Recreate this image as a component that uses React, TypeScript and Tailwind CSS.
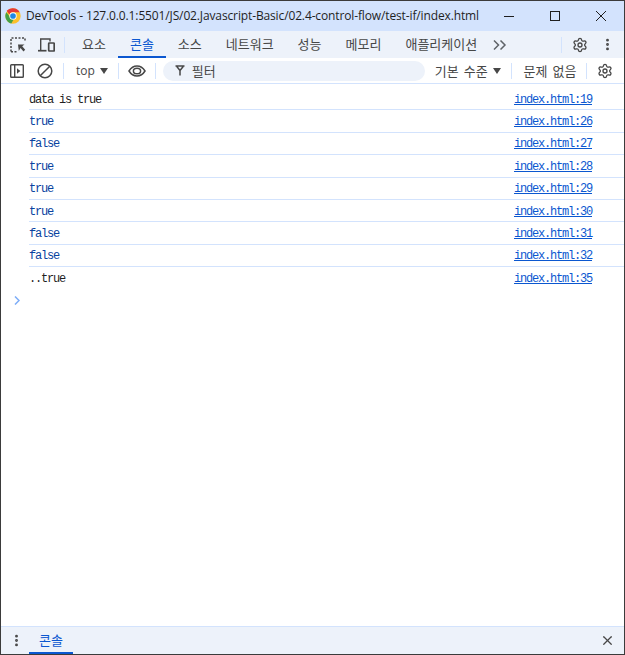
import { MoreVertical, X, Settings } from "lucide-react"

const rows = [
  { text: "data is true", src: "index.html:19", value: false },
  { text: "true", src: "index.html:26", value: true },
  { text: "false", src: "index.html:27", value: true },
  { text: "true", src: "index.html:28", value: true },
  { text: "true", src: "index.html:29", value: true },
  { text: "true", src: "index.html:30", value: true },
  { text: "false", src: "index.html:31", value: true },
  { text: "false", src: "index.html:32", value: true },
  { text: "..true", src: "index.html:35", value: false },
]

const tabs = ["요소", "콘솔", "소스", "네트워크", "성능", "메모리", "애플리케이션"]

function ChromeLogo() {
  return (
    <svg width="16" height="16" viewBox="0 0 48 48" className="shrink-0">
      <circle cx="24" cy="24" r="23" fill="#fbc02d" />
      <path d="M24 1a23 23 0 0 1 20 11.5H24a11.5 11.5 0 0 0-10.6 7L5 8.5A23 23 0 0 1 24 1z" fill="#e53935" />
      <path d="M4 12.5a23 23 0 0 0 15 33.9l8-13.8a11.5 11.5 0 0 1-13-7z" fill="#43a047" />
      <circle cx="24" cy="24" r="11" fill="#fff" />
      <circle cx="24" cy="24" r="8.5" fill="#1e88e5" />
    </svg>
  )
}

function WindowControls() {
  return (
    <div className="ml-auto flex items-center gap-[36px] pr-[18px]">
      <svg width="10" height="10" viewBox="0 0 10 10" stroke="#1f1f1f" strokeWidth="1">
        <path d="M0 5.500h10" />
      </svg>
      <svg width="10" height="10" viewBox="0 0 10 10" fill="none" stroke="#1f1f1f" strokeWidth="1">
        <rect x="0.500" y="0.500" width="9" height="9" />
      </svg>
      <svg width="10" height="10" viewBox="0 0 10 10" stroke="#1f1f1f" strokeWidth="1">
        <path d="M0 0 10 10M10 0 0 10" />
      </svg>
    </div>
  )
}

function InspectIcon() {
  return (
    <svg width="16" height="16" viewBox="0 0 16 16" fill="none" stroke="#474747" strokeWidth="1.5">
      <path d="M1 14.500V1h14v4" strokeDasharray="2 1.500" />
      <path d="M1 14.800h6" strokeDasharray="2 1.500" />
      <path d="M8 7.500h6.500l-2.300 1.700 3 3.600-1.700 1.700-3-3.500L8.800 14z" fill="#474747" stroke="none" />
    </svg>
  )
}

function DeviceIcon() {
  return (
    <svg width="17" height="14" viewBox="0 0 17 14" fill="none" stroke="#474747" strokeWidth="1.400">
      <path d="M2.700 12V1h9.300v2.500" />
      <path d="M0 12.700h8.500" strokeWidth="1.700" />
      <rect x="10.700" y="5" width="5.500" height="8" rx="0.600" strokeWidth="1.700" />
    </svg>
  )
}

function SidebarIcon() {
  return (
    <svg width="14" height="14" viewBox="0 0 14 14" fill="none" stroke="#474747" strokeWidth="1.400">
      <rect x="0.700" y="0.700" width="12.600" height="12.600" rx="0.800" />
      <path d="M4.700 1v12" />
      <path d="M7 4.300 10.300 7 7 9.700z" fill="#474747" stroke="none" />
    </svg>
  )
}

function ClearIcon() {
  return (
    <svg width="16" height="16" viewBox="0 0 16 16" fill="none" stroke="#474747" strokeWidth="1.500">
      <circle cx="8" cy="8" r="6.800" />
      <path d="M3.200 12.800 12.800 3.200" />
    </svg>
  )
}

function EyeIcon() {
  return (
    <svg width="18" height="12" viewBox="0 0 18 12" fill="none" stroke="#474747" strokeWidth="1.500">
      <path d="M1 6c2-3.200 4.800-5 8-5s6 1.800 8 5c-2 3.200-4.800 5-8 5S3 9.200 1 6z" />
      <ellipse cx="9" cy="6" rx="3.600" ry="2.800" />
    </svg>
  )
}

function FilterIcon() {
  return (
    <svg width="10" height="11" viewBox="0 0 10 11" fill="none" stroke="#474747" strokeWidth="1.500">
      <path d="M0.500 1h9M1.800 1.500 5 5.500l3.200-4M5 5v5.500" />
    </svg>
  )
}

function DoubleChevron() {
  return (
    <svg width="14" height="10" viewBox="0 0 14 10" fill="none" stroke="#5f6368" strokeWidth="1.500" className="ml-[4px] self-center">
      <path d="M1 0.500 5.500 5 1 9.500M7.500 0.500 12 5 7.500 9.500" />
    </svg>
  )
}

function Caret() {
  return <span className="ml-[5px] h-0 w-0 border-x-[4px] border-t-[6px] border-x-transparent border-t-[#474747]" />
}

function Divider({ className = "" }: { className?: string }) {
  return <div className={`h-[16px] w-px bg-[#d3e3fd] ${className}`} />
}

export default function App() {
  return (
    <div
      className="flex h-[655px] w-[625px] flex-col overflow-hidden border border-[#3b3b3b] bg-white text-[#474747]"
      style={{ fontFamily: '"Noto Sans CJK KR", "Noto Sans", sans-serif' }}
    >
      {/* Title bar */}
      <div className="flex h-[30px] shrink-0 items-center bg-[#d3e3fd]">
        <div className="ml-[4px] mr-[5px]"><ChromeLogo /></div>
        <span className="text-[12px] tracking-[-0.130px] text-[#1f1f1f]" style={{ fontFamily: '"Open Sans", sans-serif' }}>
          DevTools - 127.0.0.1:5501/JS/02.Javascript-Basic/02.4-control-flow/test-if/index.html
        </span>
        <WindowControls />
      </div>

      {/* Tabs */}
      <div className="flex h-[27px] shrink-0 items-stretch bg-[#edf2fa]">
        <div className="flex w-[69px] items-center pl-[9px]">
          <InspectIcon />
          <div className="ml-[12px]"><DeviceIcon /></div>
          <Divider className="ml-[9px]" />
        </div>
        {tabs.map((tab, i) => (
          <div
            key={tab}
            className={`flex items-center border-b-2 px-[12px] text-[13px] ${i === 1 ? "border-[#0b57d0] text-[#0b57d0]" : "border-transparent"}`}
          >
            {tab}
          </div>
        ))}
        <DoubleChevron />
        <div className="ml-auto flex items-center">
          <Divider className="mr-[10px]" />
          <Settings size={16} strokeWidth={2} className="mr-[12px]" />
          <MoreVertical size={15} strokeWidth={2.600} className="mr-[9px]" />
        </div>
      </div>

      {/* Console toolbar */}
      <div className="flex h-[26px] shrink-0 items-center border-b border-[#d3e3fd] bg-white">
        <div className="ml-[9px]"><SidebarIcon /></div>
        <div className="ml-[13px]"><ClearIcon /></div>
        <Divider className="ml-[10px]" />
        <span className="ml-[12px] text-[12px]" style={{ fontFamily: '"Open Sans", sans-serif' }}>top</span>
        <Caret />
        <Divider className="ml-[10px]" />
        <div className="ml-[9px]"><EyeIcon /></div>
        <Divider className="ml-[9px]" />
        <div className="ml-[7px] flex h-[20px] w-[262px] items-center rounded-full bg-[#edf2fa] pl-[12px]">
          <FilterIcon />
          <span className="ml-[7px] text-[13px]">필터</span>
        </div>
        <span className="ml-[10px] text-[13px] [word-spacing:2px]">기본 수준</span>
        <Caret />
        <Divider className="ml-[10px]" />
        <span className="ml-[12px] text-[13px] [word-spacing:2px]">문제 없음</span>
        <Divider className="ml-[10px]" />
        <Settings size={16} strokeWidth={2} className="ml-[10px]" />
      </div>

      {/* Console rows */}
      <div className="min-h-0 flex-1 pl-[28px] pt-[4px] text-[12px]" style={{ fontFamily: '"Liberation Mono", monospace' }}>
        {rows.map((row, i) => (
          <div
            key={row.src}
            className={`flex h-[22.400px] items-center justify-between pr-[32px] pt-[2px] ${i < rows.length - 1 ? "border-b border-[#d3e3fd]" : ""}`}
          >
            <span className={`tracking-[-1.200px] ${row.value ? "text-[#0842a0]" : "text-[#1f1f1f]"}`}>{row.text}</span>
            <span className="tracking-[-1.200px] text-[#0b57d0] underline">{row.src}</span>
          </div>
        ))}
        <svg width="6" height="9" viewBox="0 0 6 9" fill="none" stroke="#7cacf8" strokeWidth="1.500" className="-ml-[15px] mt-[6px]">
          <path d="M1 0.500 5 4.500 1 8.500" />
        </svg>
      </div>

      {/* Drawer */}
      <div className="flex h-[28px] shrink-0 items-stretch border-t border-[#d3e3fd] bg-[#edf2fa]">
        <MoreVertical size={15} strokeWidth={2.600} className="ml-[8px] self-center" />
        <div className="ml-[5px] flex w-[44px] items-center justify-center border-b-2 border-[#0b57d0] text-[13px] text-[#0b57d0]">콘솔</div>
        <X size={15} strokeWidth={2} className="ml-auto mr-[9px] self-center" />
      </div>
    </div>
  )
}
